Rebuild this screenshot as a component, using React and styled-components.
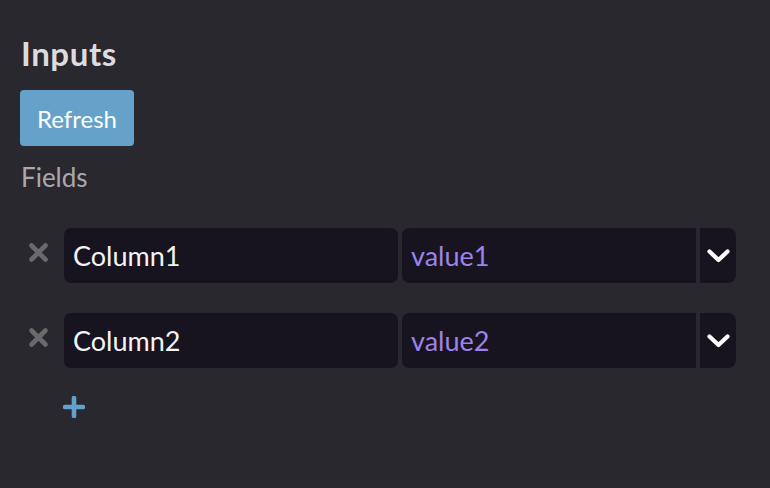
import React from "react";
import styled, { createGlobalStyle } from "styled-components";

const Global = createGlobalStyle`
  html, body { margin: 0; padding: 0; background: #29282f; }
  body { font-family: "Lato", "Noto Sans", sans-serif; }
  * { box-sizing: border-box; }
`;

const Page = styled.div`
  width: 770px;
  height: 488px;
  background: #29282f;
  padding: 33px 34px 0 20px;
  overflow: hidden;
`;

const Heading = styled.h1`
  margin: 0;
  font-size: 33px;
  line-height: 40px;
  font-weight: 700;
  letter-spacing: 0.6px;
  color: #dcdcde;
  padding-left: 1px;
`;

const RefreshButton = styled.button`
  margin-top: 17px;
  height: 56px;
  padding: 0 17px;
  border: none;
  border-radius: 4px;
  background: #65a1c9;
  color: #ffffff;
  font-family: inherit;
  font-size: 24px;
  cursor: pointer;
`;

const Label = styled.div`
  margin-top: 15px;
  font-size: 26px;
  line-height: 32px;
  color: #a9a9ab;
  padding-left: 1px;
`;

const Rows = styled.div`
  margin-top: 35px;
  display: flex;
  flex-direction: column;
  gap: 30px;
`;

const Row = styled.div`
  display: grid;
  grid-template-columns: 40px 1fr 1fr;
  gap: 4px;
  height: 55px;
`;

const RemoveButton = styled.button`
  border: none;
  background: transparent;
  padding: 0 0 6px 8px;
  display: flex;
  align-items: center;
  justify-content: flex-start;
  cursor: pointer;
`;

const Field = styled.div`
  min-width: 0;
  display: flex;
  align-items: center;
  background: #17141f;
  border-radius: 7px;
  padding-left: 9px;
  font-size: 27px;
  color: ${(p) => (p.$accent ? "#9d83ea" : "#f4f4f6")};
  white-space: nowrap;
  overflow: hidden;
`;

const SelectGroup = styled.div`
  min-width: 0;
  display: grid;
  grid-template-columns: 1fr 36px;
  gap: 4px;
`;

const SelectValue = styled(Field)`
  border-radius: 7px 0 0 7px;
`;

const Chevron = styled.button`
  border: none;
  background: #17141f;
  border-radius: 0 8px 8px 0;
  display: flex;
  align-items: center;
  justify-content: center;
  padding: 0 0 0 1px;
  cursor: pointer;
`;

const AddButton = styled.button`
  margin: 28px 0 0 43px;
  padding: 0;
  border: none;
  background: transparent;
  display: block;
  width: 22px;
  height: 22px;
  cursor: pointer;
`;

const XIcon = () => (
  <svg width="21" height="21" viewBox="0 0 21 21">
    <path d="M3.5 3.5 L17.5 17.5 M17.5 3.5 L3.5 17.5" stroke="#6a6a6d" strokeWidth="4.6" strokeLinecap="round" />
  </svg>
);

const ChevronIcon = () => (
  <svg width="23" height="14" viewBox="0 0 23 14">
    <path d="M2.5 2.5 L11.5 11 L20.5 2.5" fill="none" stroke="#ffffff" strokeWidth="4.2" strokeLinecap="round" strokeLinejoin="round" />
  </svg>
);

const PlusIcon = () => (
  <svg width="22" height="22" viewBox="0 0 22 22">
    <path d="M11 2 V20 M2 11 H20" stroke="#64a0cc" strokeWidth="4.6" strokeLinecap="round" />
  </svg>
);

const fields = [
  { name: "Column1", value: "value1" },
  { name: "Column2", value: "value2" },
];

export default function App() {
  return (
    <>
      <Global />
      <Page>
        <Heading>Inputs</Heading>
        <RefreshButton>Refresh</RefreshButton>
        <Label>Fields</Label>
        <Rows>
          {fields.map((f) => (
            <Row key={f.name}>
              <RemoveButton aria-label="remove">
                <XIcon />
              </RemoveButton>
              <Field>{f.name}</Field>
              <SelectGroup>
                <SelectValue $accent>{f.value}</SelectValue>
                <Chevron aria-label="open">
                  <ChevronIcon />
                </Chevron>
              </SelectGroup>
            </Row>
          ))}
        </Rows>
        <AddButton aria-label="add">
          <PlusIcon />
        </AddButton>
      </Page>
    </>
  );
}
